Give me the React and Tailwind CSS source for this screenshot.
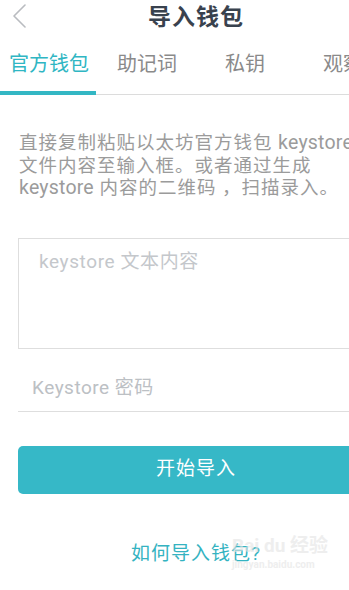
import React from 'react';

const tabs = ['官方钱包', '助记词', '私钥', '观察'];

function BackChevron() {
  return (
    <svg width="16" height="24" viewBox="0 0 16 24" fill="none">
      <path d="M13 1 L2 12 L13 23" stroke="#b9bcc0" strokeWidth="1.6" strokeLinecap="round" strokeLinejoin="round" />
    </svg>
  );
}

export default function App() {
  return (
    <div
      className="w-[349px] h-[590px] overflow-hidden bg-white relative"
      style={{ fontFamily: 'Roboto, "Noto Sans CJK SC", sans-serif' }}
    >
      <div className="w-[392px]">
        {/* Header */}
        <div className="relative h-[34px] flex items-center justify-center">
          <div className="absolute left-[12px] top-[4px]">
            <BackChevron />
          </div>
          <h1 className="text-[23px] font-bold text-[#39424e] tracking-[1px] leading-none">导入钱包</h1>
        </div>

        {/* Tabs */}
        <div className="flex h-[61px] border-b border-[#dcdcdc]">
          {tabs.map((t, i) => (
            <div key={t} className="relative flex-1 flex items-center justify-center">
              <span className={`text-[20px] ${i === 0 ? 'text-[#2fb6c3]' : 'text-[#8a8a8a]'}`}>{t}</span>
              {i === 0 && <div className="absolute left-0 right-[2px] -bottom-px h-[4px] bg-[#33b7c4]" />}
            </div>
          ))}
        </div>

        {/* Description */}
        <p className="mt-[37px] px-[19px] text-[18.5px] leading-[22.5px] tracking-[1px] text-[#9b9b9b] whitespace-nowrap">
          直接复制粘贴以太坊官方钱包 <span className="text-[19.5px] tracking-[0.2px]">keystore</span>
          <br />
          文件内容至输入框。或者通过生成
          <br />
          <span className="text-[19.5px] tracking-[0.2px]">keystore</span> 内容的二维码 ，扫描录入。
        </p>

        {/* Keystore textarea */}
        <div className="mt-[38px] ml-[18px] mr-[18px] h-[111px] border border-[#dedede] pl-[20px] pt-[9px]">
          <span className="text-[19px] text-[#c4c7cb] tracking-[0.6px]">keystore 文本内容</span>
        </div>

        {/* Password */}
        <div className="mx-[18px] h-[63px] border-b border-[#dedede] flex items-end pb-[8px] pl-[14px]">
          <span className="text-[19px] text-[#bcc0c4] tracking-[0.5px]">Keystore 密码</span>
        </div>

        {/* Button */}
        <button className="mt-[34px] mx-[18px] w-[356px] h-[48px] rounded-[5px] bg-[#36b8c7] text-white text-[19px] tracking-[1px] flex items-center justify-center">
          开始导入
        </button>

        {/* Link */}
        <div className="mt-[46px] flex justify-center">
          <span className="text-[19px] text-[#34b3c1] tracking-[1px]">如何导入钱包?</span>
        </div>
      </div>

      {/* watermark */}
      <div className="absolute left-[232px] top-[536px] flex flex-col items-start pointer-events-none opacity-60">
        <span className="text-[19px] font-bold text-[#e4e4e4] leading-none">Bai du 经验</span>
        <span className="text-[10px] font-bold text-[#e4e4e4] leading-none mt-[5px]">jingyan.baidu.com</span>
      </div>
    </div>
  );
}
